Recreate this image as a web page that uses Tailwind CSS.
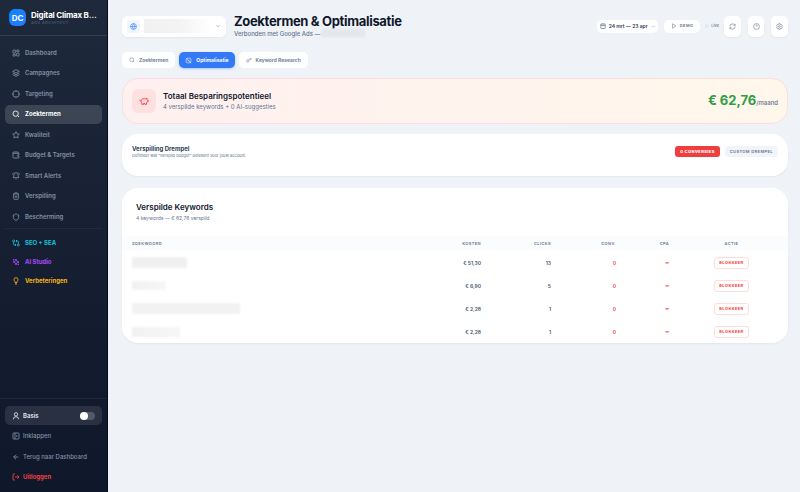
<!DOCTYPE html>
<html lang="nl">
<head>
<meta charset="utf-8">
<meta name="viewport" content="width=device-width, initial-scale=1">
<title>Zoektermen &amp; Optimalisatie</title>
<script src="https://cdn.jsdelivr.net/npm/@tailwindcss/browser@4"></script>
</head>
<body class="flex min-h-screen bg-[#eff3f8] font-['Inter',sans-serif] text-[6px] leading-[8px] text-slate-900">

<svg class="hidden" aria-hidden="true">
  <symbol id="grid" viewBox="0 0 24 24"><rect x="3" y="3" width="7" height="9" rx="1"/><rect x="14" y="3" width="7" height="5" rx="1"/><rect x="14" y="12" width="7" height="9" rx="1"/><rect x="3" y="16" width="7" height="5" rx="1"/></symbol>
  <symbol id="layers" viewBox="0 0 24 24"><path d="M12 2 22 7 12 12 2 7zM2 12l10 5 10-5M2 17l10 5 10-5"/></symbol>
  <symbol id="cross" viewBox="0 0 24 24"><circle cx="12" cy="12" r="10"/><path d="M22 12h-4M6 12H2M12 6V2M12 22v-4"/></symbol>
  <symbol id="search" viewBox="0 0 24 24"><circle cx="11" cy="11" r="8"/><path d="m21 21-4.3-4.3"/></symbol>
  <symbol id="star" viewBox="0 0 24 24"><path d="m12 2 3.1 6.3 6.9 1-5 4.8 1.2 6.9-6.2-3.2L5.800 21 7 14.100 2 9.300l6.900-1z"/></symbol>
  <symbol id="wallet" viewBox="0 0 24 24"><path d="M19 7V4a1 1 0 0 0-1-1H5a2 2 0 0 0 0 4h15a1 1 0 0 1 1 1v4h-3a2 2 0 0 0 0 4h3v4a1 1 0 0 1-1 1H5a2 2 0 0 1-2-2V5"/></symbol>
  <symbol id="bell" viewBox="0 0 24 24"><path d="M10.300 21a2 2 0 0 0 3.400 0M4 2C2.800 3.700 2 5.700 2 8M22 8c0-2.300-.8-4.300-2-6M6 8a6 6 0 0 1 12 0c0 7 3 9 3 9H3s3-2 3-9"/></symbol>
  <symbol id="trash" viewBox="0 0 24 24"><path d="M3 6h18M19 6v14a2 2 0 0 1-2 2H7a2 2 0 0 1-2-2V6M8 6V4a2 2 0 0 1 2-2h4a2 2 0 0 1 2 2v2M10 11v6M14 11v6"/></symbol>
  <symbol id="shield" viewBox="0 0 24 24"><path d="M20 13c0 5-3.500 7.500-8 9-4.500-1.500-8-4-8-9V6c3 0 6-1.500 8-4 2 2.500 5 4 8 4z"/></symbol>
  <symbol id="compare" viewBox="0 0 24 24"><circle cx="5" cy="6" r="3"/><circle cx="19" cy="18" r="3"/><path d="M12 6h5a2 2 0 0 1 2 2v7M15 9l-3-3 3-3M12 18H7a2 2 0 0 1-2-2V9M9 15l3 3-3 3"/></symbol>
  <symbol id="sparkles" viewBox="0 0 24 24"><path d="m12 3-1.900 5.800a2 2 0 0 1-1.300 1.300L3 12l5.800 1.900a2 2 0 0 1 1.300 1.300L12 21l1.900-5.800a2 2 0 0 1 1.300-1.300L21 12l-5.800-1.900a2 2 0 0 1-1.300-1.300zM5 3v4M19 17v4M3 5h4M17 19h4"/></symbol>
  <symbol id="bulb" viewBox="0 0 24 24"><path d="M15 14c.2-1 .7-1.700 1.500-2.500 1-.9 1.500-2.200 1.500-3.500A6 6 0 0 0 6 8c0 1 .2 2.200 1.500 3.500.7.700 1.300 1.500 1.500 2.500v3h6zM9 18h6M10 22h4"/></symbol>
  <symbol id="user" viewBox="0 0 24 24"><circle cx="12" cy="7" r="5"/><path d="M20 22a8 8 0 0 0-16 0"/></symbol>
  <symbol id="panel" viewBox="0 0 24 24"><rect x="3" y="3" width="18" height="18" rx="2"/><path d="M9 3v18M16 15l-3-3 3-3"/></symbol>
  <symbol id="back" viewBox="0 0 24 24"><path d="m12 19-7-7 7-7M19 12H5"/></symbol>
  <symbol id="logout" viewBox="0 0 24 24"><path d="M9 21H5a2 2 0 0 1-2-2V5a2 2 0 0 1 2-2h4M16 17l5-5-5-5M21 12H9"/></symbol>
  <symbol id="globe" viewBox="0 0 24 24"><circle cx="12" cy="12" r="10"/><path d="M12 2a14.500 14.500 0 0 0 0 20 14.500 14.500 0 0 0 0-20M2 12h20"/></symbol>
  <symbol id="down" viewBox="0 0 24 24"><path d="m6 9 6 6 6-6"/></symbol>
  <symbol id="calendar" viewBox="0 0 24 24"><rect x="3" y="4" width="18" height="18" rx="2"/><path d="M8 2v4M16 2v4M3 10h18"/></symbol>
  <symbol id="play" viewBox="0 0 24 24"><path d="m6 3 14 9-14 9z"/></symbol>
  <symbol id="refresh" viewBox="0 0 24 24"><path d="M3 12a9 9 0 0 1 9-9 9.800 9.800 0 0 1 6.700 2.700L21 8M21 3v5h-5M21 12a9 9 0 0 1-9 9 9.800 9.800 0 0 1-6.700-2.700L3 16M8 16H3v5"/></symbol>
  <symbol id="help" viewBox="0 0 24 24"><circle cx="12" cy="12" r="10"/><path d="M9.100 9a3 3 0 0 1 5.800 1c0 2-3 3-3 3M12 17v.1"/></symbol>
  <symbol id="gear" viewBox="0 0 24 24"><path d="M10 2h4l.6 3 2.400 1.400 2.900-1 2 3.500L19.600 11v2.200l2.300 2-2 3.400-2.900-1-2.400 1.400-.6 3h-4l-.6-3L7 17.600l-2.900 1-2-3.400 2.300-2V11L2.100 8.900l2-3.500 2.900 1L9.400 5z"/><circle cx="12" cy="12" r="3"/></symbol>
  <symbol id="searchoff" viewBox="0 0 24 24"><path d="M7 4h9a4 4 0 0 1 4 4v9M17 20H8a4 4 0 0 1-4-4V7M3 3l18 18M9 13l2 2M13 9l2 2M16 16l5 5"/></symbol>
  <symbol id="key" viewBox="0 0 24 24"><circle cx="7.500" cy="15.500" r="5"/><path d="m11 12 10-9M16 7.500l3 3.500 3-3-3-3"/></symbol>
  <symbol id="piggy" viewBox="0 0 24 24"><path d="M19 5c-1.500 0-2.800 1.400-3 2-3.500-1.500-11-.3-11 5 0 1.800 0 3 2 4.500V20h4v-2h3v2h4v-4c1-.5 1.700-1 2-2h2v-4h-2c0-1-.5-1.500-1-2zM2 9v1a2 2 0 0 0 2 2M16 11v.1"/></symbol>
</svg>

<aside class="flex w-[108px] shrink-0 flex-col border-r border-[#050b18] bg-linear-to-b from-[#1e293b] to-[#0f172a] font-semibold text-[#8291a7]">
  <div class="flex h-[36px] items-center gap-[5px] border-b border-white/10 pl-[9px] pr-[2px]">
    <div class="grid size-[17px] shrink-0 place-items-center rounded-[6px] bg-linear-to-br from-[#0a84ff] to-[#2579ff] text-[8px] font-bold text-white">DC</div>
    <div>
      <div class="text-[8px] leading-[10px] font-bold whitespace-nowrap tracking-tight text-white">Digital Climax B…</div>
      <div class="text-[4px] leading-[6px] tracking-widest text-slate-600">ADS ARCHITECT</div>
    </div>
  </div>

  <nav class="px-[5px] pt-[7px]" aria-label="Hoofdmenu">
    <div class="flex h-[183px] flex-col justify-between">
      <a href="#" class="flex h-[19px] items-center gap-[5px] px-[7px]"><svg class="size-[8px] fill-none stroke-current stroke-[2.500]"><use href="#grid"/></svg>Dashboard</a>
      <a href="#" class="flex h-[19px] items-center gap-[5px] px-[7px]"><svg class="size-[8px] fill-none stroke-current stroke-[2.500]"><use href="#layers"/></svg>Campagnes</a>
      <a href="#" class="flex h-[19px] items-center gap-[5px] px-[7px]"><svg class="size-[8px] fill-none stroke-current stroke-[2.500]"><use href="#cross"/></svg>Targeting</a>
      <a href="#" aria-current="page" class="flex h-[19px] items-center gap-[5px] rounded-[5px] bg-white/15 px-[7px] font-bold text-white"><svg class="size-[8px] fill-none stroke-current stroke-[2.500]"><use href="#search"/></svg>Zoektermen</a>
      <a href="#" class="flex h-[19px] items-center gap-[5px] px-[7px]"><svg class="size-[8px] fill-none stroke-current stroke-[2.500]"><use href="#star"/></svg>Kwaliteit</a>
      <a href="#" class="flex h-[19px] items-center gap-[5px] px-[7px]"><svg class="size-[8px] fill-none stroke-current stroke-[2.500]"><use href="#wallet"/></svg>Budget &amp; Targets</a>
      <a href="#" class="flex h-[19px] items-center gap-[5px] px-[7px]"><svg class="size-[8px] fill-none stroke-current stroke-[2.500]"><use href="#bell"/></svg>Smart Alerts</a>
      <a href="#" class="flex h-[19px] items-center gap-[5px] px-[7px]"><svg class="size-[8px] fill-none stroke-current stroke-[2.500]"><use href="#trash"/></svg>Verspilling</a>
      <a href="#" class="flex h-[19px] items-center gap-[5px] px-[7px]"><svg class="size-[8px] fill-none stroke-current stroke-[2.500]"><use href="#shield"/></svg>Bescherming</a>
    </div>
    <div class="mt-[2px] border-t border-white/5 pt-[4px] font-bold">
      <a href="#" class="flex h-[19px] items-center gap-[5px] px-[7px] text-[#12c4dd]"><svg class="size-[8px] fill-none stroke-current stroke-[2.500]"><use href="#compare"/></svg>SEO + SEA</a>
      <a href="#" class="flex h-[19px] items-center gap-[5px] px-[7px] text-purple-500"><svg class="size-[8px] fill-none stroke-current stroke-[2.500]"><use href="#sparkles"/></svg>AI Studio</a>
      <a href="#" class="flex h-[19px] items-center gap-[5px] px-[7px] text-[#f5b512]"><svg class="size-[8px] fill-none stroke-current stroke-[2.500]"><use href="#bulb"/></svg>Verbeteringen</a>
    </div>
  </nav>

  <div class="mt-auto border-t border-white/5 px-[5px] pt-[7px] pb-[5px] font-medium">
    <div class="flex h-[81px] flex-col justify-between">
      <label class="flex h-[19px] items-center gap-[3px] rounded-[5px] bg-white/10 px-[7px] font-semibold text-slate-200">
        <svg class="size-[8px] fill-none stroke-current stroke-[2.500]"><use href="#user"/></svg>Basis
        <input type="checkbox" class="peer sr-only">
        <span class="ml-auto flex h-[8px] w-[15px] items-center rounded-full bg-white/20 peer-checked:justify-end"><span class="size-[8px] rounded-full bg-white"></span></span>
      </label>
      <button class="flex h-[19px] items-center gap-[3px] px-[7px]"><svg class="size-[8px] fill-none stroke-current stroke-[2.500]"><use href="#panel"/></svg>Inklappen</button>
      <a href="#" class="flex h-[19px] items-center gap-[3px] px-[7px]"><svg class="size-[8px] fill-none stroke-current stroke-[2.500]"><use href="#back"/></svg>Terug naar Dashboard</a>
      <button class="flex h-[19px] items-center gap-[3px] px-[7px] font-semibold text-[#ff4545]"><svg class="size-[8px] fill-none stroke-current stroke-[2.500]"><use href="#logout"/></svg>Uitloggen</button>
    </div>
  </div>
</aside>

<main class="min-w-0 flex-1 pt-[12px] pr-[12px] pl-[14px]">
  <header class="flex h-[28px] items-center">
    <div class="relative flex h-[21px] w-[104px] items-center rounded-[5px] border border-white bg-white px-[4px] shadow-xs">
      <span class="grid size-[13px] place-items-center rounded-[3px] bg-blue-50 text-blue-500"><svg class="size-[7px] fill-none stroke-current stroke-2"><use href="#globe"/></svg></span>
      <span class="ml-[4px] h-[14px] w-[68px] bg-linear-to-r from-[#f1f1f1] via-[#f3f3f3] to-white"></span>
      <svg class="ml-auto size-[6px] fill-none stroke-slate-500 stroke-2"><use href="#down"/></svg>
      <select aria-label="Account" class="absolute inset-0 opacity-0"><option></option></select>
    </div>
    <div class="ml-[8px]">
      <h1 class="text-[13px] leading-[16px] font-bold tracking-tight">Zoektermen &amp; Optimalisatie</h1>
      <p class="flex text-[6px] leading-[10px] font-medium text-slate-500">Verbonden met Google Ads —<span class="h-[8px] w-[44px] bg-[#e4e8ed] blur-[1px]"></span></p>
    </div>
    <div class="ml-auto flex items-center">
      <button class="flex h-[13px] w-[61px] items-center justify-center gap-[3px] rounded-[5px] bg-white text-[5px] font-semibold text-slate-700"><svg class="size-[6px] fill-none stroke-current stroke-2"><use href="#calendar"/></svg>24 mrt — 23 apr<svg class="size-[5px] fill-none stroke-slate-500 stroke-2"><use href="#down"/></svg></button>
      <button class="ml-[6px] flex h-[13px] w-[36px] items-center justify-center gap-[3px] rounded-[5px] bg-white text-[4px] font-semibold tracking-widest text-slate-500"><svg class="size-[6px] fill-none stroke-slate-500 stroke-2"><use href="#play"/></svg>DEMO</button>
      <label class="ml-[5px] flex items-center gap-[2px] text-[4px] font-medium text-slate-500"><input type="checkbox" class="h-[4px] w-[4px] appearance-none rounded-full bg-slate-200">Live</label>
      <div class="ml-[5px] flex gap-[7px] text-slate-500">
        <button aria-label="Vernieuwen" class="grid h-[21px] w-[17px] place-items-center rounded-[5px] bg-white shadow-xs"><svg class="size-[7px] fill-none stroke-current stroke-2"><use href="#refresh"/></svg></button>
        <button aria-label="Help" class="grid h-[21px] w-[16px] place-items-center rounded-[5px] bg-white shadow-xs"><svg class="size-[7px] fill-none stroke-current stroke-2"><use href="#help"/></svg></button>
        <button aria-label="Instellingen" class="grid h-[21px] w-[17px] place-items-center rounded-[5px] bg-white shadow-xs"><svg class="size-[7px] fill-none stroke-current stroke-2"><use href="#gear"/></svg></button>
      </div>
    </div>
  </header>

  <div class="mt-[12px] flex gap-[4px] text-[5px] font-semibold text-slate-500">
    <button class="flex h-[16px] items-center gap-[4px] rounded-[5px] bg-white px-[7px]"><svg class="size-[6px] fill-none stroke-current stroke-2"><use href="#search"/></svg>Zoektermen</button>
    <button class="flex h-[16px] items-center gap-[4px] rounded-[5px] bg-[#3479f6] px-[6px] font-bold text-white shadow-sm shadow-blue-500/30"><svg class="size-[7px] fill-none stroke-current stroke-2"><use href="#searchoff"/></svg>Optimalisatie</button>
    <button class="flex h-[16px] items-center gap-[4px] rounded-[5px] bg-white px-[7px]"><svg class="size-[6px] fill-none stroke-current stroke-2"><use href="#key"/></svg>Keyword Research</button>
  </div>

  <section class="mt-[10px] flex h-[46px] items-center rounded-[16px] border border-[#fddede] bg-linear-to-r from-[#fff0f0] to-[#fff7eb] px-[9px]">
    <span class="grid size-[24px] place-items-center rounded-[6px] bg-[#ffe0e1] text-red-500"><svg class="size-[10px] fill-none stroke-current stroke-2"><use href="#piggy"/></svg></span>
    <div class="ml-[7px]">
      <h2 class="text-[8px] leading-[11px] font-semibold">Totaal Besparingspotentieel</h2>
      <p class="text-[6px] leading-[9px] text-slate-500">4 verspilde keywords + 0 AI-suggesties</p>
    </div>
    <p class="ml-auto flex items-baseline text-[13px] leading-[16px] font-bold text-[#2f9e44]">€ 62,76<span class="text-[6px] font-medium text-slate-500">/maand</span></p>
  </section>

  <section class="mt-[10px] flex h-[42px] justify-between rounded-[16px] bg-white px-[10px] pt-[10px] shadow-xs">
    <div>
      <h2 class="text-[6px] leading-[9px] font-bold text-slate-700">Verspilling Drempel</h2>
      <p class="text-[4px] leading-[6px] text-slate-500">Definieer wat "verspild budget" betekent voor jouw account.</p>
    </div>
    <div class="mt-[2px] flex gap-[5px] text-[4px] tracking-widest">
      <button class="h-[11px] rounded-[3px] bg-[#f03e3e] px-[5px] font-extrabold text-white">0 CONVERSIES</button>
      <button class="h-[11px] rounded-[4px] bg-slate-100 px-[5px] font-semibold text-slate-500">CUSTOM DREMPEL</button>
    </div>
  </section>

  <section class="mt-[12px] overflow-hidden rounded-[16px] bg-white shadow-xs">
    <div class="h-[48px] px-[14px] pt-[14px]">
      <h2 class="text-[8px] leading-[11px] font-semibold">Verspilde Keywords</h2>
      <p class="text-[5px] leading-[10px] text-slate-500">4 keywords — € 62,76 verspild</p>
    </div>
    <table class="w-full table-fixed text-right text-[5px] leading-[8px] font-semibold text-slate-600">
      <colgroup><col><col class="w-[70px]"><col class="w-[70px]"><col class="w-[65px]"><col class="w-[53px]"><col class="w-[109px]"></colgroup>
      <thead class="bg-[#fafcfe] text-[4px] tracking-widest text-slate-500">
        <tr class="h-[15px]">
          <th class="px-[10px] text-left font-semibold">ZOEKWOORD</th><th class="px-[10px] font-semibold">KOSTEN</th><th class="px-[10px] font-semibold">CLICKS</th><th class="px-[10px] font-semibold">CONV.</th><th class="px-[10px] font-semibold">CPA</th><th class="pr-[4px] text-center font-semibold">ACTIE</th>
        </tr>
      </thead>
      <tbody>
        <tr class="h-[23px]">
          <td class="px-[10px]"><div class="h-[11px] w-[55px] bg-[#f0f0f0] blur-[1px]"></div></td><td class="px-[10px]">€ 51,30</td><td class="px-[10px]">13</td><td class="px-[10px] text-[#f03e3e]">0</td><td class="px-[10px] text-[4px] text-[#f03e3e]">∞</td>
          <td class="pr-[4px] text-center"><button class="h-[12px] w-[35px] rounded-[3px] border border-[#ffdcdc] text-[4px] leading-[8px] font-bold tracking-widest text-[#f03e3e]">BLOKKEER</button></td>
        </tr>
        <tr class="h-[23px]">
          <td class="px-[10px]"><div class="h-[9px] w-[34px] bg-linear-to-r from-[#f1f1f1] to-[#f7f7f7] blur-[1px]"></div></td><td class="px-[10px]">€ 6,90</td><td class="px-[10px]">5</td><td class="px-[10px] text-[#f03e3e]">0</td><td class="px-[10px] text-[4px] text-[#f03e3e]">∞</td>
          <td class="pr-[4px] text-center"><button class="h-[12px] w-[35px] rounded-[3px] border border-[#ffdcdc] text-[4px] leading-[8px] font-bold tracking-widest text-[#f03e3e]">BLOKKEER</button></td>
        </tr>
        <tr class="h-[23px]">
          <td class="px-[10px]"><div class="h-[11px] w-[108px] bg-[#f2f2f2] blur-[1px]"></div></td><td class="px-[10px]">€ 2,28</td><td class="px-[10px]">1</td><td class="px-[10px] text-[#f03e3e]">0</td><td class="px-[10px] text-[4px] text-[#f03e3e]">∞</td>
          <td class="pr-[4px] text-center"><button class="h-[12px] w-[35px] rounded-[3px] border border-[#ffdcdc] text-[4px] leading-[8px] font-bold tracking-widest text-[#f03e3e]">BLOKKEER</button></td>
        </tr>
        <tr class="h-[23px]">
          <td class="px-[10px]"><div class="h-[10px] w-[48px] bg-linear-to-r from-[#f1f1f1] to-[#f7f7f7] blur-[1px]"></div></td><td class="px-[10px]">€ 2,28</td><td class="px-[10px]">1</td><td class="px-[10px] text-[#f03e3e]">0</td><td class="px-[10px] text-[4px] text-[#f03e3e]">∞</td>
          <td class="pr-[4px] text-center"><button class="h-[12px] w-[35px] rounded-[3px] border border-[#ffdcdc] text-[4px] leading-[8px] font-bold tracking-widest text-[#f03e3e]">BLOKKEER</button></td>
        </tr>
      </tbody>
    </table>
  </section>
</main>
</body>
</html>
